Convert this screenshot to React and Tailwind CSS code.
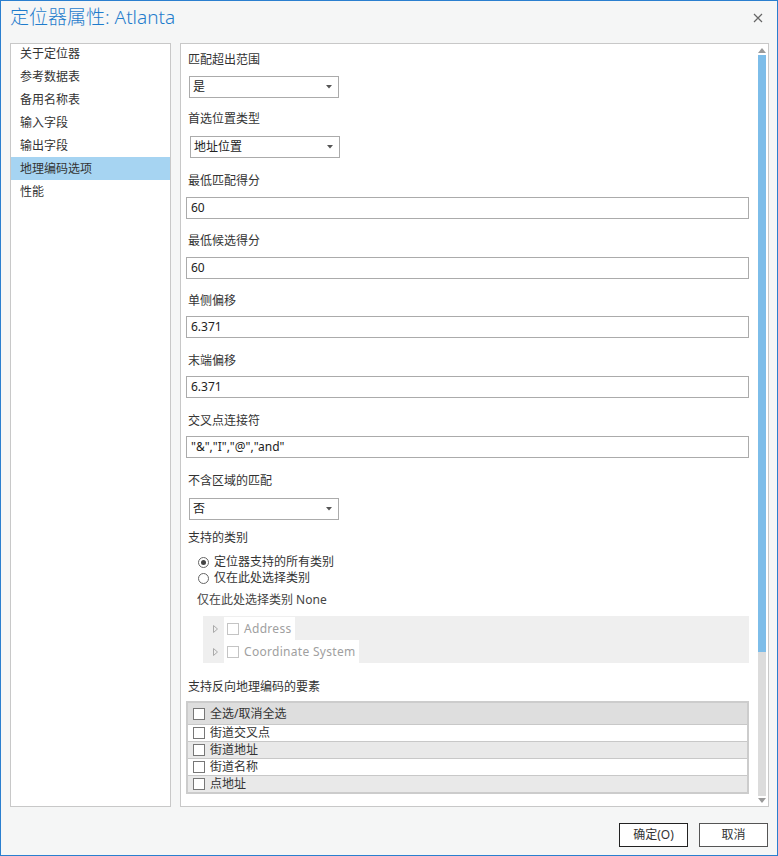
import React from "react";

const FONT = "font-['Segoe_UI','Noto_Sans','Noto_Sans_CJK_SC',sans-serif]";

const navItems = ["关于定位器", "参考数据表", "备用名称表", "输入字段", "输出字段", "地理编码选项", "性能"];

const Caret = () => (
  <svg width="6" height="4" viewBox="0 0 6 4" className="mr-[6px]">
    <path d="M0 0 L6 0 L3 3.5 Z" fill="#555" />
  </svg>
);

const Dropdown = ({ value, className = "" }) => (
  <div
    className={`flex items-center justify-between h-[22px] w-[150px] border border-[#ababab] bg-white pl-[3px] text-[12px] text-[#222] ${className}`}
  >
    <span>{value}</span>
    <Caret />
  </div>
);

const TextBox = ({ value, className = "" }) => (
  <div
    className={`flex items-center h-[22px] w-[563px] border border-[#ababab] bg-white pl-[4px] text-[12px] text-[#222] ${className}`}
  >
    {value}
  </div>
);

const Label = ({ children, className = "" }) => (
  <div className={`h-[16px] leading-[16px] text-[12px] text-[#333] pl-[2px] ${className}`}>{children}</div>
);

const Check = ({ border = "#777" }) => (
  <span
    className="inline-block w-[12px] h-[12px] bg-white border shrink-0"
    style={{ borderColor: border }}
  />
);

const Radio = ({ checked }) => (
  <span className="relative inline-flex items-center justify-center w-[11px] h-[11px] rounded-full border border-[#666] bg-white shrink-0">
    {checked && <span className="w-[5px] h-[5px] rounded-full bg-[#444]" />}
  </span>
);

const TreeRow = ({ label }) => (
  <div className="flex items-center h-[23px]">
    <svg width="5" height="8" viewBox="0 0 5 8" className="ml-[10px] mr-[6px]">
      <path d="M0.5 0.5 L4.5 4 L0.5 7.5 Z" fill="none" stroke="#aaa" strokeWidth="1" />
    </svg>
    <div className="flex items-center h-[23px] bg-white pl-[3px] pr-[3px] gap-[5px]">
      <Check border="#c4c4c4" />
      <span className="text-[12px] text-[#a0a0a0] tracking-[0.3px]">{label}</span>
    </div>
  </div>
);

const rows = [
  { label: "街道交叉点", bg: "bg-white" },
  { label: "街道地址", bg: "bg-[#e9e9e9]" },
  { label: "街道名称", bg: "bg-white" },
  { label: "点地址", bg: "bg-[#e9e9e9]" },
];

export default function App() {
  return (
    <div className={`w-[778px] h-[856px] bg-[#f5f6f6] border border-[#2a7fcf] flex flex-col ${FONT}`}>
      {/* title bar */}
      <div className="flex items-center justify-between h-[33px] pl-[9px] pr-[14px]">
        <span className="text-[19px] text-[#1f7ccc] font-light">定位器属性: Atlanta</span>
        <svg width="10" height="10" viewBox="0 0 10 10">
          <path d="M1 1 L9 9 M9 1 L1 9" stroke="#666" strokeWidth="1.2" />
        </svg>
      </div>

      <div className="flex mt-[9px] ml-[9px] h-[764px]">
        {/* nav */}
        <div className="w-[161px] h-full border border-[#c8c8c8] bg-white overflow-hidden">
          <div className="-mt-[2px]">
            {navItems.map((item, i) => (
              <div
                key={item}
                className={`h-[23px] leading-[23px] pl-[9px] text-[12px] text-[#333] ${i === 5 ? "bg-[#a6d4f2]" : ""}`}
              >
                {item}
              </div>
            ))}
          </div>
        </div>

        {/* content */}
        <div className="ml-[9px] w-[589px] h-full border border-[#c8c8c8] bg-white flex">
          <div className="flex-1 pl-[5px] pt-[8px]">
            <Label>匹配超出范围</Label>
            <Dropdown value="是" className="mt-[8px] ml-[3px]" />
            <Label className="mt-[13px]">首选位置类型</Label>
            <Dropdown value="地址位置" className="mt-[9px] ml-[4px]" />
            <Label className="mt-[15px]">最低匹配得分</Label>
            <TextBox value="60" className="mt-[8px]" />
            <Label className="mt-[14px]">最低候选得分</Label>
            <TextBox value="60" className="mt-[8px]" />
            <Label className="mt-[14px]">单侧偏移</Label>
            <TextBox value="6.371" className="mt-[7px]" />
            <Label className="mt-[15px]">末端偏移</Label>
            <TextBox value="6.371" className="mt-[7px]" />
            <Label className="mt-[15px]">交叉点连接符</Label>
            <TextBox value={'"&","I","@","and"'} className="mt-[7px]" />
            <Label className="mt-[15px]">不含区域的匹配</Label>
            <Dropdown value="否" className="mt-[9px] ml-[3px]" />
            <Label className="mt-[10px]">支持的类别</Label>
            <div className="mt-[8px] ml-[12px] flex items-center gap-[5px] h-[16px] text-[12px] text-[#333]">
              <Radio checked />
              <span>定位器支持的所有类别</span>
            </div>
            <div className="ml-[12px] flex items-center gap-[5px] h-[16px] text-[12px] text-[#333]">
              <Radio />
              <span>仅在此处选择类别</span>
            </div>
            <div className="mt-[6px] ml-[11px] h-[16px] leading-[16px] text-[12px] text-[#444]">
              仅在此处选择类别 None
            </div>
            <div className="mt-[8px] ml-[17px] w-[546px] h-[47px] bg-[#efefef] pt-[1px]">
              <TreeRow label="Address" />
              <TreeRow label="Coordinate System" />
            </div>
            <Label className="mt-[16px]">支持反向地理编码的要素</Label>
            <div className="mt-[6px] w-[563px] border-2 border-[#cccccc] bg-[#dedede]">
              <div className="flex items-center h-[21px] pl-[5px] gap-[5px] text-[12px] text-[#333]">
                <Check />
                <span>全选/取消全选</span>
              </div>
              {rows.map((r) => (
                <div
                  key={r.label}
                  className={`flex items-center h-[17px] pl-[5px] gap-[5px] border-t border-[#c8c8c8] text-[12px] text-[#333] ${r.bg}`}
                >
                  <Check />
                  <span>{r.label}</span>
                </div>
              ))}
            </div>
          </div>

          {/* scrollbar */}
          <div className="w-[8px] ml-[8px] mr-[2px] flex flex-col items-center pt-[3px] pb-[2px]">
            <svg width="8" height="6" viewBox="0 0 8 6">
              <path d="M0 6 L8 6 L4 1 Z" fill="#9a9a9a" />
            </svg>
            <div className="w-[8px] flex-1 mt-[2px] flex flex-col">
              <div className="h-[597px] bg-[#7dbde9]" />
              <div className="flex-1 bg-[#dcdcdc]" />
            </div>
            <svg width="8" height="6" viewBox="0 0 8 6" className="mt-[2px]">
              <path d="M0 0 L8 0 L4 5 Z" fill="#9a9a9a" />
            </svg>
          </div>
        </div>
      </div>

      {/* buttons */}
      <div className="flex justify-end gap-[11px] mt-[16px] pr-[9px]">
        <button className="w-[69px] h-[24px] border border-[#222] bg-white text-[12px] text-[#333]">确定(O)</button>
        <button className="w-[69px] h-[24px] border border-[#555] bg-white text-[12px] text-[#333]">取消</button>
      </div>
    </div>
  );
}
